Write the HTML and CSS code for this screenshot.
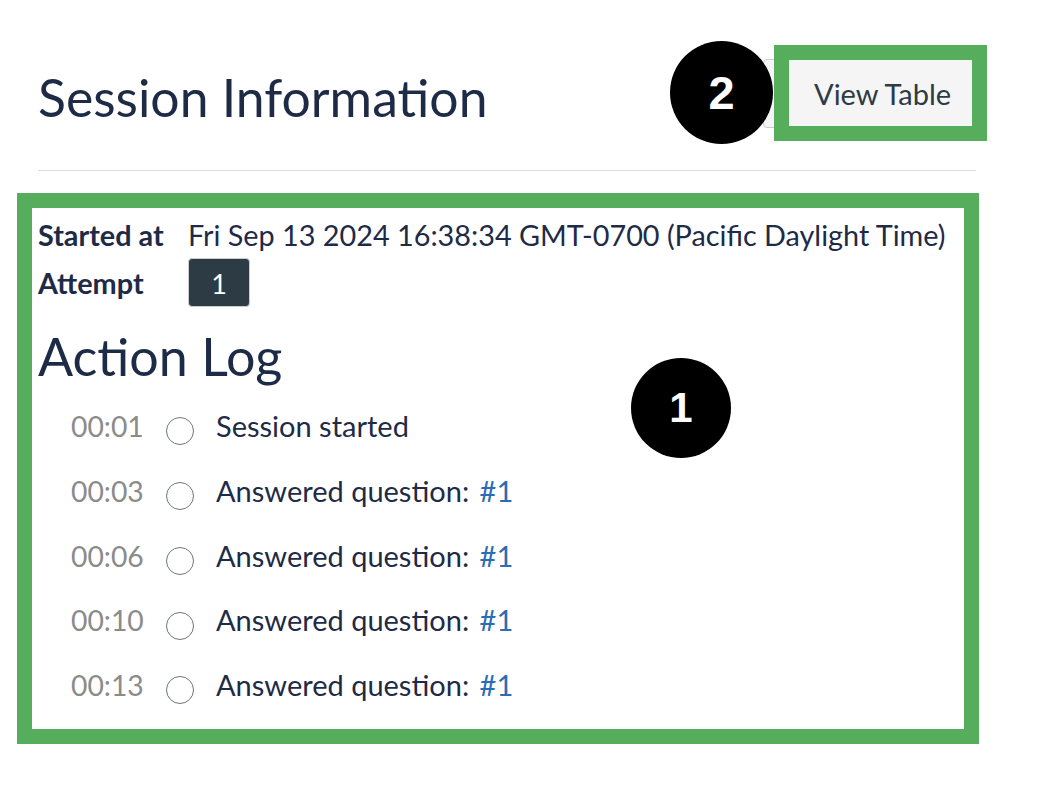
FILE: index.html
```html
<!DOCTYPE html>
<html lang="en">
<head>
<meta charset="utf-8">
<title>Session Information</title>
<link rel="stylesheet" href="styles.css">
</head>
<body>
<main class="page">
  <header class="head">
    <h1 class="title">Session Information</h1>
    <button class="btn" type="button">View Table</button>
  </header>
  <hr class="rule">
  <section class="info">
    <div class="row"><span class="label">Started at</span><span class="value">Fri Sep 13 2024 16:38:34 GMT-0700 (Pacific Daylight Time)</span></div>
    <div class="row"><span class="label">Attempt</span><span class="badge">1</span></div>
  </section>
  <h2 class="log-title">Action Log</h2>
  <ol class="log">
    <li class="entry"><span class="time">00:01</span><span class="dot"></span><span class="desc">Session started</span></li>
    <li class="entry"><span class="time">00:03</span><span class="dot"></span><span class="desc">Answered question: <a class="link" href="#">#1</a></span></li>
    <li class="entry"><span class="time">00:06</span><span class="dot"></span><span class="desc">Answered question: <a class="link" href="#">#1</a></span></li>
    <li class="entry"><span class="time">00:10</span><span class="dot"></span><span class="desc">Answered question: <a class="link" href="#">#1</a></span></li>
    <li class="entry"><span class="time">00:13</span><span class="dot"></span><span class="desc">Answered question: <a class="link" href="#">#1</a></span></li>
  </ol>
</main>
<div class="frame frame-1"></div>
<div class="frame frame-2"></div>
<div class="marker marker-1">1</div>
<div class="marker marker-2">2</div>
</body>
</html>
```

FILE: styles.css
```css
* { box-sizing: border-box; }

body {
  margin: 0;
  background: #fff;
  font-family: Lato, "Open Sans", sans-serif;
  color: #1e2b47;
}

.page {
  padding: 0 76px 0 38px;
}

.head {
  display: flex;
  justify-content: space-between;
  align-items: flex-start;
  padding-top: 59px;
}

.title {
  margin: 6px 0 0;
  font-size: 51.7px;
  line-height: 65px;
  font-weight: 400;
  color: #1e2b47;
}

.btn {
  width: 213px;
  height: 69px;
  padding: 0 0 0 50px;
  text-align: left;
  font-family: Lato, sans-serif;
  font-size: 29px;
  color: #2d3b45;
  background: #f5f5f5;
  border: 1px solid #c7cdd1;
  border-radius: 4px;
}

.rule {
  margin: 40px 0 0;
  height: 0;
  border: 0;
  border-top: 1px solid #dcdcdc;
}

.info {
  margin-top: 49px;
  display: flex;
  flex-direction: column;
  gap: 8px;
  font-size: 28.8px;
}

.row {
  display: flex;
  align-items: baseline;
  line-height: 30px;
}

.label {
  width: 150px;
  flex: none;
  font-weight: 700;
}

.badge {
  display: inline-block;
  width: 62px;
  padding: 10px 0 8px;
  text-align: center;
  font-size: 27px;
  line-height: 29px;
  color: #fff;
  background: #2d3b45;
  border: 1px solid #c7cdd1;
  border-radius: 4px;
}

.log-title {
  margin: 17px 0 0;
  font-size: 52px;
  line-height: 65px;
  font-weight: 400;
}

.log {
  list-style: none;
  margin: 5px 0 0;
  padding: 0 0 0 33px;
  font-size: 29px;
}

.entry {
  display: flex;
  align-items: baseline;
  height: 64.75px;
  line-height: 64.75px;
}

.time {
  width: 95px;
  flex: none;
  font-size: 28.3px;
  color: #8b8b8b;
}

.dot {
  align-self: center;
  width: 28px;
  height: 28px;
  margin: 10px 22px 0 0;
  flex: none;
  border: 1.5px solid #6b7780;
  border-radius: 50%;
}

.link {
  margin-left: 3px;
  color: #2b6db5;
  text-decoration: none;
}

.frame {
  position: absolute;
  border: 15px solid #56ae5c;
}

.frame-1 {
  left: 17px;
  top: 193px;
  width: 962px;
  height: 551px;
}

.frame-2 {
  left: 774px;
  top: 45px;
  width: 213px;
  height: 96px;
}

.marker {
  position: absolute;
  display: flex;
  align-items: center;
  justify-content: center;
  border-radius: 50%;
  background: #000;
  color: #fff;
  font-family: "Liberation Sans", Arial, sans-serif;
  font-weight: 700;
}

.marker-1 {
  left: 631px;
  top: 358px;
  width: 100px;
  height: 100px;
  font-size: 42px;
}

.marker-2 {
  left: 670px;
  top: 41px;
  width: 103px;
  height: 103px;
  font-size: 47px;
}
```
